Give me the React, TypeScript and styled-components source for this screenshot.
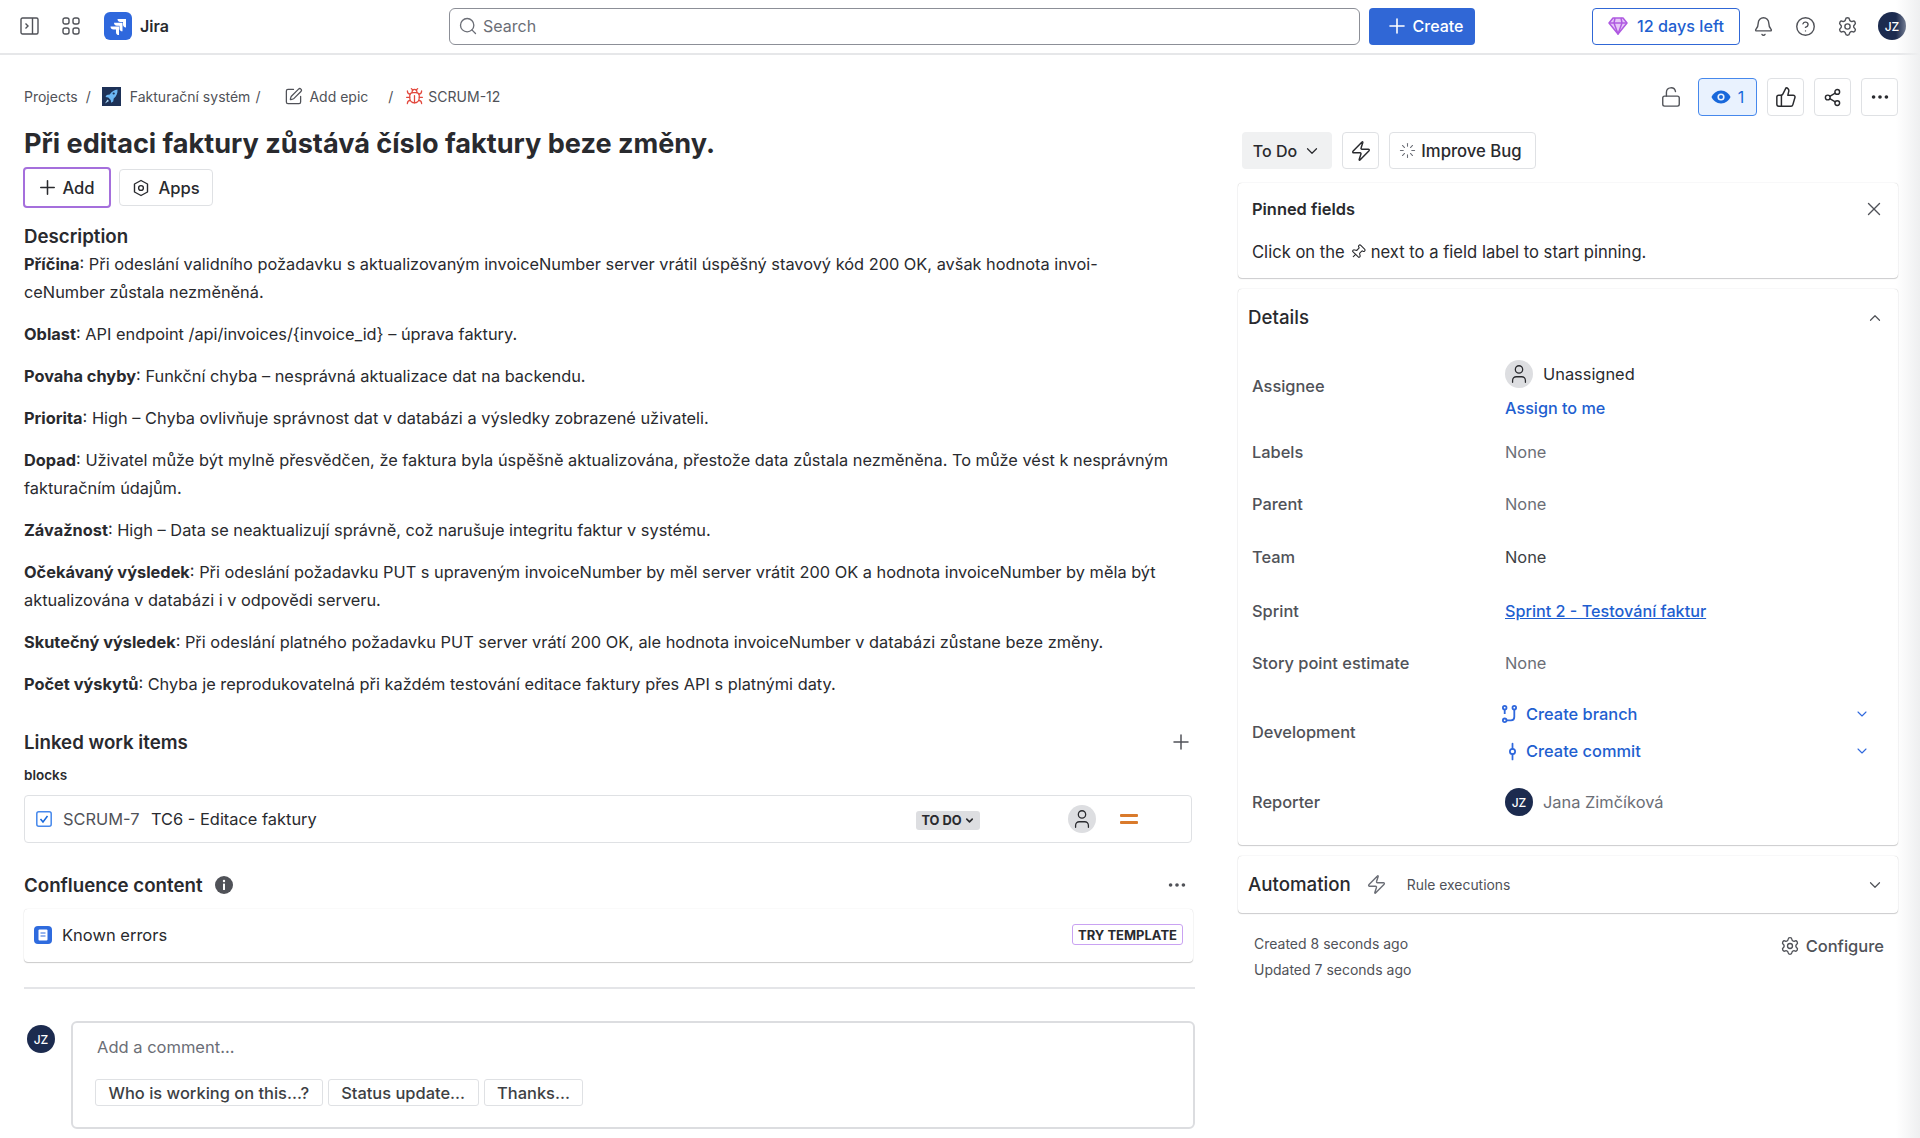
import React from 'react'
import styled, { createGlobalStyle } from 'styled-components'
import {
  Search, Plus, Bell, CircleHelp, Settings, LockOpen, ThumbsUp, Share2, Ellipsis, Zap,
  Loader, X, Pin, ChevronUp, ChevronDown, GitCommitVertical, User, SquarePen, Bug,
} from 'lucide-react'

const GlobalStyle = createGlobalStyle`
  html, body { margin: 0; padding: 0; background: #fff; }
  body {
    font-family: Inter, "Noto Sans", "Liberation Sans", sans-serif;
    color: #292a2e;
    font-size: 16px;
  }
  * { box-sizing: border-box; }
`

const PanelIcon = () => (
  <svg width="20" height="18" viewBox="0 0 20 18" fill="none" stroke="#505258" strokeWidth="1.4">
    <rect x="1" y="1" width="17" height="16" rx="1.5" />
    <path d="M12.5 1v16" />
    <path d="M5.5 6.5 8 9l-2.5 2.5" />
  </svg>
)

const GridIcon = () => (
  <svg width="18" height="18" viewBox="0 0 18 18" fill="none" stroke="#505258" strokeWidth="1.4">
    <rect x="1" y="1" width="6" height="6" rx="2" />
    <rect x="11" y="1" width="6" height="6" rx="2" />
    <rect x="1" y="11" width="6" height="6" rx="2" />
    <rect x="11" y="11" width="6" height="6" rx="2" />
  </svg>
)

const JiraLogo = () => (
  <svg width="28" height="28" viewBox="0 0 28 28">
    <rect width="28" height="28" rx="6" fill="#2f68dd" />
    <path d="M13.500 7H22v8.500c-2 0-3-1.200-3-2.900V10h-2.500c-1.700 0-3-1.200-3-3Z" fill="#fff" />
    <path d="M10 10.800h8.500v8.500c-2 0-3-1.200-3-2.900v-2.600H13c-1.700 0-3-1.200-3-3Z" fill="#fff" />
    <path d="M6.500 14.600H15v8.500c-2 0-3-1.200-3-2.900v-2.600H9.500c-1.700 0-3-1.200-3-3Z" fill="#fff" />
  </svg>
)

const RocketIcon = () => (
  <svg width="19" height="19" viewBox="0 0 19 19">
    <rect width="19" height="19" fill="#1d3157" />
    <path d="M15.500 2.500c.3 3.800-1 6.800-3.800 9l-.5 3-2 1.200-.5-2.800-2.400-2.400-2.800-.4L4.700 8l3-.5c2-2.900 4.700-4.500 7.800-5Z" fill="#6cb6f2" />
    <circle cx="11.700" cy="6.500" r="1.100" fill="#1d3157" />
    <path d="M5.500 12.500 3 16.500l4-2.500Z" fill="#a9d6f7" />
  </svg>
)

const HexIcon = () => (
  <svg width="18" height="18" viewBox="0 0 18 18" fill="none" stroke="#292a2e" strokeWidth="1.4">
    <path d="M9 1.500 15.500 5v8L9 16.500 2.500 13V5Z" strokeLinejoin="round" />
    <circle cx="9" cy="9" r="2.400" />
  </svg>
)

const EyeIcon = () => (
  <svg width="20" height="14" viewBox="0 0 20 14">
    <path d="M10 .5C5.500.5 2 3.500.5 7 2 10.500 5.500 13.500 10 13.500s8-3 9.500-6.500C18 3.500 14.500.5 10 .5Z" fill="#1868db" />
    <circle cx="10" cy="7" r="3.600" fill="#e9f2fe" />
    <circle cx="10" cy="7" r="2" fill="#1868db" />
  </svg>
)

const GemIcon = () => (
  <svg width="20" height="18" viewBox="0 0 20 18" fill="none" stroke="#af59e1" strokeWidth="1.500" strokeLinejoin="round">
    <path d="M5 1h10l4 5-9 11L1 6Z" fill="#e6c8f7" />
    <path d="M1 6h18M7 1 6 6l4 11 4-11-1-5" />
  </svg>
)

const BranchIcon = () => (
  <svg width="15" height="18" viewBox="0 0 15 18" fill="none" stroke="#2f68dd" strokeWidth="1.800">
    <circle cx="2.700" cy="2.700" r="1.800" />
    <circle cx="12.300" cy="2.700" r="1.800" />
    <circle cx="2.700" cy="15.300" r="1.800" />
    <path d="M2.700 4.500v4.500M12.300 4.500v7.500c0 2.200-1.300 3.300-3.300 3.300H4.500" />
  </svg>
)

const CheckIcon = () => (
  <svg width="16" height="16" viewBox="0 0 16 16" fill="none" stroke="#4688ec" strokeWidth="1.500">
    <rect x=".8" y=".8" width="14.400" height="14.400" rx="2" />
    <path d="m4.500 8 2.500 3 4.500-6" stroke="#1868db" />
  </svg>
)

const DocIcon = () => (
  <svg width="18" height="18" viewBox="0 0 18 18">
    <rect width="18" height="18" rx="4" fill="#2f6bde" />
    <rect x="4.500" y="3.500" width="9" height="11" rx="1" fill="#fff" />
    <path d="M6.500 7h5M6.500 10h5" stroke="#2f6bde" strokeWidth="1.200" />
  </svg>
)

const FilledInfo = () => (
  <svg width="18" height="18" viewBox="0 0 18 18">
    <circle cx="9" cy="9" r="9" fill="#505258" />
    <rect x="8" y="7.500" width="2" height="6.500" rx=".6" fill="#fff" />
    <circle cx="9" cy="5" r="1.200" fill="#fff" />
  </svg>
)

const Page = styled.div`
  position: relative;
  width: 1920px;
  height: 1138px;
  overflow: hidden;
  background: #fff;
`

const EdgeShade = styled.div`
  position: absolute;
  top: 0;
  right: 0;
  bottom: 0;
  width: 24px;
  pointer-events: none;
  background: linear-gradient(to right, rgba(235, 236, 238, 0), #eeeff0);
`

const TopBar = styled.header`
  height: 55px;
  padding: 0 14px 1px 0;
  display: flex;
  align-items: center;
  border-bottom: 2px solid #e6e7e9;
`

const BrandGroup = styled.div`
  width: 449px;
  padding-left: 20px;
  display: flex;
  align-items: center;
`

const BarIconSlot = styled.span<{ $w: number }>`
  width: ${p => p.$w}px;
  display: flex;
  align-items: center;
`

const JiraName = styled.span`
  margin-left: 8px;
  font-size: 16px;
  font-weight: 600;
`

const SearchBox = styled.div`
  width: 911px;
  height: 37px;
  padding-left: 8px;
  display: flex;
  align-items: center;
  gap: 5px;
  border: 1px solid #8c8f97;
  border-radius: 6px;
  color: #6b6e76;
  font-size: 16px;
`

const CreateButton = styled.button`
  margin-left: 9px;
  width: 106px;
  height: 37px;
  padding-right: 2px;
  display: flex;
  align-items: center;
  justify-content: center;
  gap: 4px;
  border: 0;
  border-radius: 4px;
  background: #3067d6;
  color: #fff;
  font: 500 16px Inter, sans-serif;
`

const TrialButton = styled.button`
  margin-left: auto;
  width: 148px;
  height: 37px;
  display: flex;
  align-items: center;
  justify-content: center;
  gap: 9px;
  background: #fff;
  border: 1px solid #3067d6;
  border-radius: 4px;
  color: #1f5fd0;
  font: 500 16.2px Inter, sans-serif;
`

const BarIcons = styled.div`
  margin: 0 10px 0 2px;
  display: flex;
  align-items: center;
`

const BarIconButton = styled.span`
  width: 42px;
  height: 36px;
  display: flex;
  align-items: center;
  justify-content: center;
  color: #505258;
`

const Avatar = styled.span<{ $size?: number }>`
  width: ${p => p.$size ?? 28}px;
  height: ${p => p.$size ?? 28}px;
  flex: none;
  border-radius: 50%;
  display: flex;
  align-items: center;
  justify-content: center;
  background: #1c2b4f;
  color: #fff;
  font-size: 12px;
  font-weight: 500;
`

const GhostAvatar = styled(Avatar)`
  background: #dddee1;
  color: #292a2e;
`

const Main = styled.main`
  padding: 23px 21px 0 24px;
  display: grid;
  grid-template-columns: 1171px 660px;
  column-gap: 43px;
`

const Crumbs = styled.nav`
  height: 36px;
  display: flex;
  align-items: center;
  color: #505258;
  font-size: 14px;
`

const Crumb = styled.span<{ $ml?: number }>`
  margin-left: ${p => p.$ml ?? 0}px;
  display: inline-flex;
  align-items: center;
`

const Title = styled.h1`
  margin: 6px 0 0;
  height: 47px;
  display: flex;
  align-items: center;
  font-size: 27.1px;
  font-weight: 700;
`

const ActionRow = styled.div`
  height: 41px;
  display: flex;
  align-items: center;
  gap: 8px;
  margin-left: -1px;
`

const QuickButton = styled.button<{ $focus?: boolean }>`
  height: ${p => (p.$focus ? 41 : 37)}px;
  width: ${p => (p.$focus ? 88 : 94)}px;
  padding: 0 ${p => (p.$focus ? 3 : 0)}px 0 0;
  display: flex;
  align-items: center;
  justify-content: center;
  gap: ${p => (p.$focus ? 3 : 8)}px;
  background: #fff;
  border: ${p => (p.$focus ? '2px solid #a56fdc' : '1px solid #dfe1e4')};
  border-radius: 4px;
  color: #292a2e;
  font: 500 16.6px Inter, sans-serif;
`

const SectionTitle = styled.h2<{ $mt: number }>`
  margin: ${p => p.$mt}px 0 0;
  height: 24px;
  line-height: 24px;
  font-size: 18.7px;
  font-weight: 600;
`

const Body = styled.div`
  margin-top: 1px;
`

const Para = styled.p`
  margin: 0 0 14px;
  line-height: 28px;
  font-size: 16.35px;
  color: #292a2e;
  b { font-weight: 700; }
`

const TitleRow = styled.div<{ $mt: number }>`
  margin-top: ${p => p.$mt}px;
  height: 24px;
  display: flex;
  align-items: center;
  justify-content: space-between;
`

const InlineTitle = styled.h2`
  margin: 0;
  display: flex;
  align-items: center;
  gap: 12px;
  font-size: 18.7px;
  font-weight: 600;
`

const RowTool = styled.span<{ $mr: number }>`
  width: 24px;
  margin-right: ${p => p.$mr}px;
  display: flex;
  justify-content: center;
  color: #505258;
`

const BlocksLabel = styled.div`
  margin-top: 11px;
  height: 20px;
  line-height: 20px;
  font-size: 13.5px;
  font-weight: 600;
`

const LinkRow = styled.div`
  margin: 10px 3px 0 0;
  height: 48px;
  padding-left: 11px;
  display: flex;
  align-items: center;
  border: 1px solid #dfe1e4;
  border-radius: 4px;
  font-size: 16.4px;
`

const LinkKey = styled.span`
  margin-left: 11px;
  width: 88px;
  color: #505258;
`

const LinkStatus = styled.span`
  margin: 2px 0 0 auto;
  width: 64px;
  height: 19px;
  display: flex;
  align-items: center;
  justify-content: center;
  gap: 2px;
  background: #dddee1;
  border-radius: 3px;
  font-size: 12.8px;
  font-weight: 700;
`

const AvatarSlot = styled.span`
  margin-left: 88px;
`

const PrioritySlot = styled.span`
  margin: 0 53px 0 24px;
  display: flex;
  flex-direction: column;
  gap: 4px;
  i {
    display: block;
    width: 18px;
    height: 3px;
    background: #d97a2b;
    border-radius: 1px;
  }
`

const DocCard = styled.div`
  margin: 12px 2px 0 0;
  height: 53px;
  padding: 0 10px 2px 10px;
  display: flex;
  align-items: center;
  gap: 10px;
  border-radius: 4px;
  font-size: 16.5px;
  box-shadow: 0 1px 1px rgba(30, 31, 33, 0.22), 0 0 1px rgba(30, 31, 33, 0.2);
`

const TemplateTag = styled.span`
  margin-left: auto;
  width: 111px;
  height: 21px;
  display: flex;
  align-items: center;
  justify-content: center;
  border: 1.5px solid #c9a2f2;
  border-radius: 3px;
  font-size: 13px;
  font-weight: 700;
`

const Rule = styled.hr`
  margin: 25px 0 0;
  height: 2px;
  border: 0;
  background: #e4e5e8;
`

const CommentRow = styled.div`
  margin-top: 32px;
  display: flex;
  align-items: flex-start;
  gap: 16px;
  padding-left: 3px;
`

const CommentAvatar = styled(Avatar)`
  margin-top: 4px;
`

const CommentBox = styled.div`
  width: 1124px;
  height: 108px;
  padding: 12px 24px 0;
  border: 2px solid #dcdde0;
  border-radius: 6px;
`

const Placeholder = styled.div`
  height: 24px;
  line-height: 24px;
  color: #6b6e76;
  font-size: 16.5px;
`

const Chips = styled.div`
  margin-top: 20px;
  margin-left: -2px;
  display: flex;
  gap: 5px;
`

const Chip = styled.span`
  height: 27px;
  padding: 0 12.500px;
  display: flex;
  align-items: center;
  border: 1px solid #dfe1e4;
  border-radius: 3px;
  color: #3d3f44;
  font-size: 16.45px;
  font-weight: 500;
`

const TopActions = styled.div`
  height: 38px;
  display: flex;
  justify-content: flex-end;
  align-items: center;
  gap: 10px;
`

const LockSlot = styled.span`
  margin-right: 6px;
  display: flex;
  color: #505258;
`

const IconButton = styled.button`
  width: 37px;
  height: 38px;
  display: flex;
  align-items: center;
  justify-content: center;
  padding: 0;
  background: #fff;
  border: 1px solid #dfe1e4;
  border-radius: 4px;
  color: #292a2e;
`

const WatchButton = styled(IconButton)`
  width: 59px;
  gap: 7px;
  background: #e9f2fe;
  border-color: #4688ec;
  color: #1868db;
  font: 400 16px Inter, sans-serif;
`

const StatusRow = styled.div`
  margin-top: 16px;
  margin-left: 4px;
  height: 37px;
  display: flex;
  align-items: center;
  gap: 10px;
`

const StatusButton = styled.button`
  width: 90px;
  height: 37px;
  display: flex;
  align-items: center;
  justify-content: center;
  gap: 6px;
  border: 0;
  border-radius: 4px;
  background: #f0f1f2;
  color: #292a2e;
  font: 500 16px Inter, sans-serif;
`

const BoltButton = styled(IconButton)`
  height: 37px;
`

const ImproveButton = styled(IconButton)`
  width: 147px;
  height: 37px;
  padding-right: 4px;
  gap: 5px;
  font: 500 16.700px Inter, sans-serif;
`

const Card = styled.section<{ $mt: number; $h: number }>`
  margin-top: ${p => p.$mt}px;
  height: ${p => p.$h}px;
  border-radius: 4px;
  background: #fff;
  box-shadow: 0 1px 1px rgba(30, 31, 33, 0.2), 0 0 1px rgba(30, 31, 33, 0.3);
`

const PinnedHead = styled.div`
  height: 52px;
  padding: 0 13px 0 14px;
  display: flex;
  align-items: center;
  justify-content: space-between;
  font-size: 16.4px;
  font-weight: 600;
`

const PinnedText = styled.div`
  padding-left: 14px;
  margin-top: 7px;
  display: flex;
  align-items: center;
  gap: 5px;
  font-size: 16.6px;
`

const CardHead = styled.div`
  height: 57px;
  padding: 0 14px 0 10px;
  display: flex;
  align-items: center;
  justify-content: space-between;
  font-size: 18.7px;
  font-weight: 500;
`

const FieldRow = styled.div<{ $h: number }>`
  height: ${p => p.$h}px;
  padding-left: 14px;
  display: grid;
  grid-template-columns: 253px 1fr;
  align-items: center;
  font-size: 16.4px;
`

const FieldLabel = styled.span`
  color: #505258;
  font-weight: 500;
`

const FieldValue = styled.span<{ $dim?: boolean }>`
  color: ${p => (p.$dim ? '#6b6e76' : '#3d3f44')};
`

const Stack = styled.div`
  padding-top: 6px;
  display: flex;
  flex-direction: column;
  gap: 10px;
`

const PersonLine = styled.div`
  display: flex;
  align-items: center;
  gap: 10px;
`

const BlueLink = styled.a<{ $under?: boolean }>`
  color: #1f5fd0;
  font-size: 16.2px;
  font-weight: 500;
  text-decoration: ${p => (p.$under ? 'underline' : 'none')};
`

const DevLink = styled(BlueLink)`
  font-size: 16.4px;
`

const DevLines = styled.div`
  margin-left: -3px;
  padding: 2px 28px 0 0;
  display: flex;
  flex-direction: column;
  gap: 13px;
`

const DevLine = styled.div`
  height: 24px;
  display: grid;
  grid-template-columns: 24px 1fr 16px;
  align-items: center;
  color: #2f68dd;
`

const AutoHead = styled(CardHead)`
  justify-content: flex-start;
`

const AutoNote = styled.span`
  margin-left: 20px;
  font-size: 13.9px;
  font-weight: 400;
  color: #505258;
`

const AutoBolt = styled.span`
  margin-left: 15px;
  display: flex;
  color: #6b6e76;
`

const AutoChevron = styled.span`
  margin-left: auto;
  display: flex;
  color: #505258;
`

const MetaRow = styled.div`
  margin-top: 18px;
  padding: 0 14px 0 16px;
  display: flex;
  justify-content: space-between;
`

const Stamps = styled.div`
  font-size: 14px;
  line-height: 26px;
  color: #505258;
`

const ConfigureLink = styled.span`
  margin-top: 2px;
  height: 26px;
  display: flex;
  align-items: center;
  gap: 6px;
  color: #505258;
  font-size: 16.5px;
  font-weight: 500;
`

const paragraphs: [string, string][] = [
  ['Příčina', ': Při odeslání validního požadavku s aktualizovaným invoiceNumber server vrátil úspěšný stavový kód 200 OK, avšak hodnota invoi-\nceNumber zůstala nezměněná.'],
  ['Oblast', ': API endpoint /api/invoices/{invoice_id} – úprava faktury.'],
  ['Povaha chyby', ': Funkční chyba – nesprávná aktualizace dat na backendu.'],
  ['Priorita', ': High – Chyba ovlivňuje správnost dat v databázi a výsledky zobrazené uživateli.'],
  ['Dopad', ': Uživatel může být mylně přesvědčen, že faktura byla úspěšně aktualizována, přestože data zůstala nezměněna. To může vést k nesprávným\nfakturačním údajům.'],
  ['Závažnost', ': High – Data se neaktualizují správně, což narušuje integritu faktur v systému.'],
  ['Očekávaný výsledek', ': Při odeslání požadavku PUT s upraveným invoiceNumber by měl server vrátit 200 OK a hodnota invoiceNumber by měla být\naktualizována v databázi i v odpovědi serveru.'],
  ['Skutečný výsledek', ': Při odeslání platného požadavku PUT server vrátí 200 OK, ale hodnota invoiceNumber v databázi zůstane beze změny.'],
  ['Počet výskytů', ': Chyba je reprodukovatelná při každém testování editace faktury přes API s platnými daty.'],
]

const App = () => {
  return (
    <Page>
      <GlobalStyle />
      <TopBar>
        <BrandGroup>
          <BarIconSlot $w={42}><PanelIcon /></BarIconSlot>
          <BarIconSlot $w={42}><GridIcon /></BarIconSlot>
          <JiraLogo />
          <JiraName>Jira</JiraName>
        </BrandGroup>
        <SearchBox><Search size={20} strokeWidth={1.6} />Search</SearchBox>
        <CreateButton><Plus size={24} strokeWidth={1.6} />Create</CreateButton>
        <TrialButton><GemIcon />12 days left</TrialButton>
        <BarIcons>
          <BarIconButton><Bell size={21} strokeWidth={1.6} /></BarIconButton>
          <BarIconButton><CircleHelp size={21} strokeWidth={1.6} /></BarIconButton>
          <BarIconButton><Settings size={21} strokeWidth={1.6} /></BarIconButton>
        </BarIcons>
        <Avatar>JZ</Avatar>
      </TopBar>
      <Main>
        <div>
          <Crumbs>
            <Crumb>Projects</Crumb>
            <Crumb $ml={8}>/</Crumb>
            <Crumb $ml={11}><RocketIcon /></Crumb>
            <Crumb $ml={9}>Fakturační systém</Crumb>
            <Crumb $ml={5}>/</Crumb>
            <Crumb $ml={24}><SquarePen size={19} strokeWidth={1.6} /></Crumb>
            <Crumb $ml={6}>Add epic</Crumb>
            <Crumb $ml={20}>/</Crumb>
            <Crumb $ml={12}><Bug size={19} strokeWidth={1.6} color="#e2483d" /></Crumb>
            <Crumb $ml={4}>SCRUM-12</Crumb>
          </Crumbs>
          <Title>Při editaci faktury zůstává číslo faktury beze změny.</Title>
          <ActionRow>
            <QuickButton $focus><Plus size={23} strokeWidth={1.6} />Add</QuickButton>
            <QuickButton><HexIcon />Apps</QuickButton>
          </ActionRow>
          <SectionTitle $mt={17}>Description</SectionTitle>
          <Body>
            {paragraphs.map(([lead, rest]) => (
              <Para key={lead}>
                <b>{lead}</b>
                {rest.split('\n').map((line, i) => (
                  <React.Fragment key={i}>{i > 0 && <br />}{line}</React.Fragment>
                ))}
              </Para>
            ))}
          </Body>
          <TitleRow $mt={32}>
            <InlineTitle>Linked work items</InlineTitle>
            <RowTool $mr={2}><Plus size={24} strokeWidth={1.5} /></RowTool>
          </TitleRow>
          <BlocksLabel>blocks</BlocksLabel>
          <LinkRow>
            <CheckIcon />
            <LinkKey>SCRUM-7</LinkKey>
            <span>TC6 - Editace faktury</span>
            <LinkStatus>TO DO<ChevronDown size={11} strokeWidth={3.5} /></LinkStatus>
            <AvatarSlot><GhostAvatar><User size={22} strokeWidth={1.4} /></GhostAvatar></AvatarSlot>
            <PrioritySlot><i /><i /></PrioritySlot>
          </LinkRow>
          <TitleRow $mt={30}>
            <InlineTitle>Confluence content <FilledInfo /></InlineTitle>
            <RowTool $mr={6}><Ellipsis size={22} /></RowTool>
          </TitleRow>
          <DocCard>
            <DocIcon />
            Known errors
            <TemplateTag>TRY TEMPLATE</TemplateTag>
          </DocCard>
          <Rule />
          <CommentRow>
            <CommentAvatar>JZ</CommentAvatar>
            <CommentBox>
              <Placeholder>Add a comment...</Placeholder>
              <Chips>
                <Chip>Who is working on this...?</Chip>
                <Chip>Status update...</Chip>
                <Chip>Thanks...</Chip>
              </Chips>
            </CommentBox>
          </CommentRow>
        </div>
        <div>
          <TopActions>
            <LockSlot><LockOpen size={22} strokeWidth={1.5} /></LockSlot>
            <WatchButton><EyeIcon />1</WatchButton>
            <IconButton><ThumbsUp size={22} strokeWidth={1.6} /></IconButton>
            <IconButton><Share2 size={19} strokeWidth={1.8} /></IconButton>
            <IconButton><Ellipsis size={22} /></IconButton>
          </TopActions>
          <StatusRow>
            <StatusButton>To Do<ChevronDown size={18} strokeWidth={1.6} /></StatusButton>
            <BoltButton><Zap size={22} strokeWidth={1.6} /></BoltButton>
            <ImproveButton><Loader size={17} strokeWidth={1.5} color="#6b6e76" />Improve Bug</ImproveButton>
          </StatusRow>
          <Card $mt={14} $h={95}>
            <PinnedHead>Pinned fields<X size={22} strokeWidth={1.5} color="#505258" /></PinnedHead>
            <PinnedText>Click on the <Pin size={16} strokeWidth={1.6} style={{ transform: 'rotate(45deg)' }} /> next to a field label to start pinning.</PinnedText>
          </Card>
          <Card $mt={11} $h={556}>
            <CardHead>Details<ChevronUp size={18} strokeWidth={1.6} color="#505258" /></CardHead>
            <FieldRow $h={80}>
              <FieldLabel>Assignee</FieldLabel>
              <Stack>
                <PersonLine><GhostAvatar><User size={22} strokeWidth={1.4} /></GhostAvatar>Unassigned</PersonLine>
                <BlueLink>Assign to me</BlueLink>
              </Stack>
            </FieldRow>
            <FieldRow $h={51}><FieldLabel>Labels</FieldLabel><FieldValue $dim>None</FieldValue></FieldRow>
            <FieldRow $h={53}><FieldLabel>Parent</FieldLabel><FieldValue $dim>None</FieldValue></FieldRow>
            <FieldRow $h={54}><FieldLabel>Team</FieldLabel><FieldValue>None</FieldValue></FieldRow>
            <FieldRow $h={53}><FieldLabel>Sprint</FieldLabel><BlueLink $under>Sprint 2 - Testování faktur</BlueLink></FieldRow>
            <FieldRow $h={52}><FieldLabel>Story point estimate</FieldLabel><FieldValue $dim>None</FieldValue></FieldRow>
            <FieldRow $h={85}>
              <FieldLabel>Development</FieldLabel>
              <DevLines>
                <DevLine><BranchIcon /><DevLink>Create branch</DevLink><ChevronDown size={16} strokeWidth={1.6} /></DevLine>
                <DevLine><GitCommitVertical size={21} strokeWidth={2} /><DevLink>Create commit</DevLink><ChevronDown size={16} strokeWidth={1.6} /></DevLine>
              </DevLines>
            </FieldRow>
            <FieldRow $h={56}>
              <FieldLabel>Reporter</FieldLabel>
              <PersonLine><Avatar>JZ</Avatar><FieldValue $dim>Jana Zimčíková</FieldValue></PersonLine>
            </FieldRow>
          </Card>
          <Card $mt={11} $h={57}>
            <AutoHead>
              Automation
              <AutoBolt><Zap size={21} strokeWidth={1.6} /></AutoBolt>
              <AutoNote>Rule executions</AutoNote>
              <AutoChevron><ChevronDown size={18} strokeWidth={1.6} /></AutoChevron>
            </AutoHead>
          </Card>
          <MetaRow>
            <Stamps>Created 8 seconds ago<br />Updated 7 seconds ago</Stamps>
            <ConfigureLink><Settings size={20} strokeWidth={1.6} />Configure</ConfigureLink>
          </MetaRow>
        </div>
      </Main>
      <EdgeShade />
    </Page>
  )
}

export default App
